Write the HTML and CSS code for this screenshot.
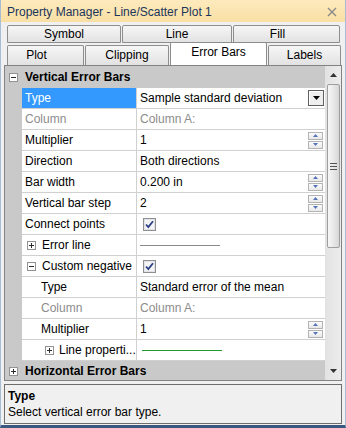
FILE: index.html
```html
<!DOCTYPE html>
<html lang="en">
<head>
    <meta charset="UTF-8">
    <meta name="viewport" content="width=device-width, initial-scale=1.0">
    <title>Property Manager</title>
    <link rel="stylesheet" href="styles.css">
</head>
<body>
<div class="window">

    <!-- Title bar -->
    <div class="titlebar">
        <span class="title">Property Manager - Line/Scatter Plot 1</span>
        <svg class="close" width="10" height="10" viewBox="0 0 10 10">
            <path d="M1 1 L9 9 M9 1 L1 9" stroke="#8a8a8a" stroke-width="1.4"/>
        </svg>
    </div>

    <!-- Tabs -->
    <div class="tabs">
        <div class="tab-row">
            <div class="tab w-symbol">Symbol</div>
            <div class="tab w-line">Line</div>
            <div class="tab w-fill off">Fill</div>
        </div>
        <div class="tab-row lower">
            <div class="tab w-plot off">Plot</div>
            <div class="tab w-clip">Clipping</div>
            <div class="tab w-err active">Error Bars</div>
            <div class="tab w-labels">Labels</div>
        </div>
    </div>

    <!-- Property grid -->
    <div class="panel">
        <div class="grid">
            <div class="section">
                <span class="toggle minus"></span>Vertical Error Bars
            </div>

            <div class="row">
                <div class="name selected">Type</div>
                <div class="value">Sample standard deviation
                    <span class="dropdown">
                        <svg width="7" height="4" viewBox="0 0 7 4"><path d="M0 0 H7 L3.5 4 Z" fill="#000"/></svg>
                    </span>
                </div>
            </div>
            <div class="row dim">
                <div class="name">Column</div>
                <div class="value">Column A:</div>
            </div>
            <div class="row">
                <div class="name">Multiplier</div>
                <div class="value">1
                    <span class="spin">
                        <span class="spin-btn"><svg width="5" height="3" viewBox="0 0 5 3"><path d="M0 3 L2.5 0 L5 3 Z" fill="#5574b8"/></svg></span>
                        <span class="spin-btn"><svg width="5" height="3" viewBox="0 0 5 3"><path d="M0 0 L5 0 L2.5 3 Z" fill="#5574b8"/></svg></span>
                    </span>
                </div>
            </div>
            <div class="row">
                <div class="name">Direction</div>
                <div class="value">Both directions</div>
            </div>
            <div class="row">
                <div class="name">Bar width</div>
                <div class="value">0.200 in
                    <span class="spin">
                        <span class="spin-btn"><svg width="5" height="3" viewBox="0 0 5 3"><path d="M0 3 L2.5 0 L5 3 Z" fill="#5574b8"/></svg></span>
                        <span class="spin-btn"><svg width="5" height="3" viewBox="0 0 5 3"><path d="M0 0 L5 0 L2.5 3 Z" fill="#5574b8"/></svg></span>
                    </span>
                </div>
            </div>
            <div class="row">
                <div class="name">Vertical bar step</div>
                <div class="value">2
                    <span class="spin">
                        <span class="spin-btn"><svg width="5" height="3" viewBox="0 0 5 3"><path d="M0 3 L2.5 0 L5 3 Z" fill="#5574b8"/></svg></span>
                        <span class="spin-btn"><svg width="5" height="3" viewBox="0 0 5 3"><path d="M0 0 L5 0 L2.5 3 Z" fill="#5574b8"/></svg></span>
                    </span>
                </div>
            </div>
            <div class="row">
                <div class="name">Connect points</div>
                <div class="value">
                    <svg class="check" width="13" height="13" viewBox="0 0 13 13">
                        <rect x="0.5" y="0.5" width="12" height="12" fill="#f4f4f4" stroke="#8e8f8f"/>
                        <rect x="1.5" y="1.5" width="10" height="10" fill="none" stroke="#e2e3ea"/>
                        <path d="M3 6.5 L5.3 9 L10 3.2" fill="none" stroke="#2a3f86" stroke-width="1.8"/>
                    </svg>
                </div>
            </div>
            <div class="row">
                <div class="name sub"><span class="toggle plus"></span>Error line</div>
                <div class="value"><span class="swatch grey"></span></div>
            </div>
            <div class="row">
                <div class="name sub"><span class="toggle minus"></span>Custom negative</div>
                <div class="value">
                    <svg class="check" width="13" height="13" viewBox="0 0 13 13">
                        <rect x="0.5" y="0.5" width="12" height="12" fill="#f4f4f4" stroke="#8e8f8f"/>
                        <rect x="1.5" y="1.5" width="10" height="10" fill="none" stroke="#e2e3ea"/>
                        <path d="M3 6.5 L5.3 9 L10 3.2" fill="none" stroke="#2a3f86" stroke-width="1.8"/>
                    </svg>
                </div>
            </div>
            <div class="row">
                <div class="name child">Type</div>
                <div class="value">Standard error of the mean</div>
            </div>
            <div class="row dim">
                <div class="name child">Column</div>
                <div class="value">Column A:</div>
            </div>
            <div class="row">
                <div class="name child">Multiplier</div>
                <div class="value">1
                    <span class="spin">
                        <span class="spin-btn"><svg width="5" height="3" viewBox="0 0 5 3"><path d="M0 3 L2.5 0 L5 3 Z" fill="#5574b8"/></svg></span>
                        <span class="spin-btn"><svg width="5" height="3" viewBox="0 0 5 3"><path d="M0 0 L5 0 L2.5 3 Z" fill="#5574b8"/></svg></span>
                    </span>
                </div>
            </div>
            <div class="row">
                <div class="name subchild"><span class="toggle plus"></span>Line properti...</div>
                <div class="value"><span class="swatch green"></span></div>
            </div>

            <div class="section short">
                <span class="toggle plus"></span>Horizontal Error Bars
            </div>
        </div>

        <!-- Scrollbar -->
        <div class="scrollbar">
            <div class="arrow">
                <svg width="7" height="4" viewBox="0 0 7 4"><path d="M0 4 L3.5 0 L7 4 Z" fill="#333"/></svg>
            </div>
            <div class="track">
                <div class="thumb"><span class="grip"></span></div>
            </div>
            <div class="arrow">
                <svg width="7" height="4" viewBox="0 0 7 4"><path d="M0 0 H7 L3.5 4 Z" fill="#333"/></svg>
            </div>
        </div>
    </div>

    <!-- Description -->
    <div class="desc">
        <div class="desc-title">Type</div>
        <div>Select vertical error bar type.</div>
    </div>
</div>
</body>
</html>
```

FILE: styles.css
```css
/* General */
body {
    margin: 0;
    background-color: #f0f0f0;
    font-family: "Liberation Sans", Arial, sans-serif;
    font-size: 12px;
    color: #000;
}

.window {
    width: 346px;
    height: 428px;
    box-sizing: border-box;
    display: flex;
    flex-direction: column;
    background-color: #f0f0f0;
    border-left: 1px solid #a9bcd5;
    border-right: 1px solid #a9bcd5;
    border-bottom: 3px solid #3a587f;
}

/* Title bar */
.titlebar {
    height: 22px;
    flex-shrink: 0;
    display: flex;
    align-items: center;
    justify-content: space-between;
    padding: 2px 8px 0 6px;
    box-sizing: border-box;
    background: linear-gradient(#fdeabd, #f8dfa4);
}

.title {
    color: #1c355a;
}

/* Tabs */
.tabs {
    padding: 3px 0 0 6px;
    flex-shrink: 0;
}

.tab-row {
    display: flex;
    gap: 1px;
}

.tab-row.lower {
    margin-top: 2px;
}

.tab {
    height: 18px;
    box-sizing: border-box;
    border: 1px solid #8d8d8d;
    border-radius: 2px 2px 0 0;
    background: linear-gradient(#f6f6f6, #e2e2e2);
    text-align: center;
    line-height: 17px;
}

.tab-row.lower .tab {
    height: 20px;
    border-bottom: none;
    line-height: 19px;
}

.tab-row.lower .tab.active {
    height: 23px;
    margin-top: -3px;
    background: #fff;
    line-height: 19px;
}

.tab.off {
    padding-right: 18px;
}

.w-symbol { width: 114px; }
.w-line { width: 110px; }
.w-fill { width: 107px; }
.w-plot { width: 77px; }
.w-clip { width: 84px; }
.w-err { width: 97px; }
.w-labels { width: 73px; }

/* Property grid panel */
.panel {
    display: flex;
    width: 338px;
    height: 316px;
    margin-left: 3px;
    box-sizing: border-box;
    border: 1px solid #838383;
    flex-shrink: 0;
}

.grid {
    width: 320px;
    background-color: #c9c9c9;
}

.section {
    height: 22px;
    display: flex;
    align-items: center;
    padding-left: 4px;
    font-weight: bold;
}

.section.short {
    height: 20px;
}

.section .toggle {
    margin-right: 7px;
}

.toggle {
    display: inline-block;
    position: relative;
    width: 9px;
    height: 9px;
    box-sizing: border-box;
    border: 1px solid #939393;
    background: #fff;
    flex-shrink: 0;
}

.toggle::before,
.toggle.plus::after {
    content: "";
    position: absolute;
    background: #2c2c2c;
}

.toggle::before {
    left: 1px;
    top: 3px;
    width: 5px;
    height: 1px;
}

.toggle.plus::after {
    left: 3px;
    top: 1px;
    width: 1px;
    height: 5px;
}

.row {
    display: flex;
    height: 21px;
    padding-left: 17px;
}

.name,
.value {
    height: 21px;
    box-sizing: border-box;
    background: #fff;
    border-bottom: 1px solid #d0d0d0;
    display: flex;
    align-items: center;
    white-space: nowrap;
}

.name {
    width: 115px;
    padding-left: 3px;
    border-right: 1px solid #d0d0d0;
}

.name.selected {
    background: #3399ff;
    color: #fff;
}

.name.sub {
    padding-left: 5px;
}

.name.sub .toggle {
    margin-right: 6px;
}

.name.child {
    padding-left: 19px;
}

.name.subchild {
    padding-left: 23px;
}

.name.subchild .toggle {
    margin-right: 5px;
}

.value {
    width: 188px;
    padding-left: 3px;
}

.row.dim .name,
.row.dim .value {
    color: #8c8c8c;
}

/* Value widgets */
.dropdown {
    width: 16px;
    height: 16px;
    box-sizing: border-box;
    margin: 0 1px 0 auto;
    border: 1px solid #5f5f5f;
    box-shadow: inset 1px 1px 0 #fff;
    background: #eeeeee;
    display: flex;
    align-items: center;
    justify-content: center;
}

.spin {
    display: flex;
    flex-direction: column;
    gap: 1px;
    margin: 0 2px 0 auto;
}

.spin-btn {
    width: 15px;
    height: 8px;
    box-sizing: border-box;
    border: 1px solid #b3b3b3;
    background: linear-gradient(#fbfbfb, #e8e8e8);
    display: flex;
    align-items: center;
    justify-content: center;
}

.check {
    margin-left: 3px;
}

.swatch {
    display: block;
    width: 80px;
    height: 1px;
    margin-left: 0;
}

.swatch.grey {
    background: #8a8a8a;
}

.swatch.green {
    margin-left: 2px;
    background: #1d9a2a;
}

/* Scrollbar */
.scrollbar {
    width: 16px;
    display: flex;
    flex-direction: column;
    background: linear-gradient(to right, #e2e2e2, #ececec);
}

.arrow {
    height: 18px;
    display: flex;
    align-items: center;
    justify-content: center;
    flex-shrink: 0;
}

.track {
    flex: 1;
}

.thumb {
    height: 164px;
    margin: 0 1px 0 2px;
    box-sizing: border-box;
    border: 1px solid #9e9e9e;
    border-radius: 2px;
    background: linear-gradient(to right, #f7f7f7, #e6e6e6 55%, #d6d6d6);
    display: flex;
    align-items: center;
    justify-content: center;
}

.grip {
    width: 7px;
    height: 5px;
    border-top: 1px solid #555;
    border-bottom: 1px solid #555;
    position: relative;
}

.grip::after {
    content: "";
    position: absolute;
    left: 0;
    top: 2px;
    width: 7px;
    height: 1px;
    background: #555;
}

/* Description */
.desc {
    width: 338px;
    height: 40px;
    margin: 3px 0 0 3px;
    box-sizing: border-box;
    border: 1px solid #6e6e6e;
    padding: 3px 0 0 3px;
    line-height: 16px;
    flex-shrink: 0;
}

.desc-title {
    font-weight: bold;
}
```
